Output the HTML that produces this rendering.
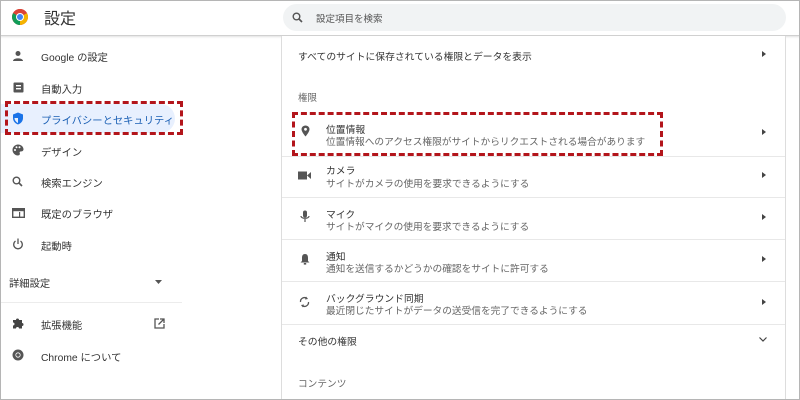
<!DOCTYPE html>
<html><head><meta charset="utf-8"><style>
*{margin:0;padding:0;box-sizing:border-box}
body{width:800px;height:400px;overflow:hidden;background:#fff;font-family:"Liberation Sans","Noto Sans CJK JP",sans-serif;position:relative;color:#333}
.frame{position:absolute;left:0;top:0;width:800px;height:400px;border:1px solid #b5b5b5;z-index:10;pointer-events:none}
.hdr{position:absolute;left:0;top:0;width:800px;height:36px;border-bottom:1px solid #d0d0d0;box-shadow:0 1px 2px rgba(0,0,0,.12);background:#fff}
.title{position:absolute;left:44px;top:5px;font-size:16px;color:#333}
.search{position:absolute;left:283px;top:4px;width:503px;height:27px;border-radius:14px;background:#f1f3f4}
.search span{position:absolute;left:33px;top:7px;font-size:9.5px;color:#555}
.abs{position:absolute}
.side{position:absolute;font-size:10.3px;color:#333}
.ic{position:absolute}
.sel{position:absolute;left:0;top:104px;width:175px;height:29px;background:#e8f0fe;border-radius:0 15px 15px 0}
.card{position:absolute;left:281px;top:36px;width:505px;height:364px;border-left:1px solid #ddd;border-right:1px solid #ddd;background:#fff}
.rt{position:absolute;font-size:9.8px;color:#333}
.rs{position:absolute;font-size:9.7px;color:#666}
.div{position:absolute;left:282px;width:503px;height:1px;background:#e8e8e8}
.arr{position:absolute;left:762px;width:0;height:0;border-top:3.5px solid transparent;border-bottom:3.5px solid transparent;border-left:4px solid #444}
.red{position:absolute;border:3px dashed #b3151b}
</style></head><body>
<div class="hdr">
<svg class="ic" style="left:11px;top:8px" width="18" height="18" viewBox="0 0 18 18"><circle cx="9" cy="9" r="8" fill="#db4437"/><path d="M9 9 L2.1 13 A8 8 0 0 0 9 17 Z" fill="#0f9d58"/><path d="M9 9 L2.1 13 A8 8 0 0 1 1 9 A8 8 0 0 1 2.1 5 Z" fill="#0f9d58"/><path d="M9 9 L9 17 A8 8 0 0 0 15.9 5 Z" fill="#f4b400"/><path d="M9 9 L15.9 5 A8 8 0 0 0 9 1 A8 8 0 0 0 2.1 5Z" fill="#db4437"/><circle cx="9" cy="9" r="4" fill="#fff"/><circle cx="9" cy="9" r="3" fill="#4285f4"/></svg>
<div class="title">設定</div>
<div class="search"><svg class="ic" style="left:9px;top:8px" width="11" height="11" viewBox="0 0 11 11"><circle cx="4.5" cy="4.5" r="3.3" stroke="#555" stroke-width="1.4" fill="none"/><path d="M7 7 L10 10" stroke="#555" stroke-width="1.6"/></svg><span>設定項目を検索</span></div>
</div>
<div class="sel"></div>
<svg class="ic" style="left:12px;top:50px" width="12" height="12" viewBox="0 0 12 12"><circle cx="6" cy="3.5" r="2.5" fill="#555"/><path d="M1 11 C1 7.5 11 7.5 11 11Z" fill="#555"/></svg>
<svg class="ic" style="left:13px;top:81px" width="11" height="12" viewBox="0 0 11 12"><rect x="0.5" y="1.5" width="10" height="10" rx="1" fill="#555"/><rect x="3" y="4" width="5" height="1.4" fill="#fff"/><rect x="3" y="7" width="5" height="1.4" fill="#fff"/></svg>
<svg class="ic" style="left:12px;top:112px" width="12" height="13" viewBox="0 0 12 13"><path d="M6 0.5 L11 2.5 V6 C11 9 9 11.5 6 12.5 C3 11.5 1 9 1 6 V2.5Z" fill="#1a73e8"/><path d="M6 2 V11 C4 10 2.5 8 2.5 6 H6Z" fill="#fff" opacity=".9"/></svg>
<svg class="ic" style="left:12px;top:144px" width="12" height="12" viewBox="0 0 12 12"><path d="M6 0.5 C9 0.5 11.5 2.7 11.5 5.3 C11.5 7 10 7.5 8.8 7.5 C7.5 7.5 7.5 8.5 7.8 9.3 C8.2 10.5 7.3 11.5 6 11.5 C3 11.5 0.5 9 0.5 6 C0.5 3 3 0.5 6 0.5Z" fill="#555"/><circle cx="3" cy="6" r="1" fill="#fff"/><circle cx="4.5" cy="3.3" r="1" fill="#fff"/><circle cx="7.5" cy="3.3" r="1" fill="#fff"/></svg>
<svg class="ic" style="left:12px;top:176px" width="11" height="11" viewBox="0 0 11 11"><circle cx="4.5" cy="4.5" r="3.3" stroke="#555" stroke-width="1.4" fill="none"/><path d="M7 7 L10 10" stroke="#555" stroke-width="1.6"/></svg>
<svg class="ic" style="left:12px;top:208px" width="13" height="10" viewBox="0 0 13 10"><rect x="0.7" y="0.7" width="11.6" height="8.6" fill="none" stroke="#555" stroke-width="1.4"/><rect x="0.7" y="0.7" width="11.6" height="2.5" fill="#555"/><rect x="7" y="4" width="1.2" height="5" fill="#555"/></svg>
<svg class="ic" style="left:12px;top:238px" width="12" height="12" viewBox="0 0 12 12"><path d="M3.5 3 A4.3 4.3 0 1 0 8.5 3" fill="none" stroke="#555" stroke-width="1.3"/><path d="M6 0.5 V6" stroke="#555" stroke-width="1.3"/></svg>
<svg class="ic" style="left:155px;top:280px" width="7" height="4" viewBox="0 0 7 4"><path d="M0 0 H7 L3.5 4Z" fill="#555"/></svg>
<div class="abs" style="left:0;top:302px;width:182px;height:1px;background:#ececec"></div>
<svg class="ic" style="left:12px;top:317px" width="12" height="12" viewBox="0 0 12 12"><path d="M1 3 H4 A1.5 1.5 0 1 1 7 3 H10 V6 A1.5 1.5 0 1 1 10 9 V11.5 H7 A1.5 1.5 0 1 0 4 11.5 H1 V8.5 A1.5 1.5 0 1 0 1 5.5Z" fill="#444"/></svg>
<svg class="ic" style="left:154px;top:318px" width="11" height="11" viewBox="0 0 11 11"><path d="M5 1 H1 V10 H10 V6" fill="none" stroke="#555" stroke-width="1.3"/><path d="M6 1 H10 V5 M10 1 L4.5 6.5" fill="none" stroke="#555" stroke-width="1.3"/></svg>
<svg class="ic" style="left:12px;top:349px" width="12" height="12" viewBox="0 0 12 12"><circle cx="6" cy="6" r="5.5" fill="#555"/><circle cx="6" cy="6" r="2.6" fill="#fff"/><circle cx="6" cy="6" r="1.8" fill="#555"/></svg>
<div class="side" style="left:41px;top:49px">Google の設定</div>
<div class="side" style="left:41px;top:81px">自動入力</div>
<div class="side" style="left:41px;top:112px;color:#1a5fb4">プライバシーとセキュリティ</div>
<div class="side" style="left:41px;top:144px">デザイン</div>
<div class="side" style="left:41px;top:175px">検索エンジン</div>
<div class="side" style="left:41px;top:206px">既定のブラウザ</div>
<div class="side" style="left:41px;top:238px">起動時</div>
<div class="side" style="left:9px;top:275px">詳細設定</div>
<div class="side" style="left:41px;top:317px">拡張機能</div>
<div class="side" style="left:41px;top:349px">Chrome について</div>
<div class="card"></div>
<div class="rt" style="left:298px;top:49px">すべてのサイトに保存されている権限とデータを表示</div>
<div class="arr" style="top:51px"></div>
<div class="rs" style="left:298px;top:90px;font-size:9.5px">権限</div>
<svg class="ic" style="left:301px;top:125px" width="9" height="12" viewBox="0 0 9 12"><path d="M4.5 0.5 C7 0.5 8.5 2.3 8.5 4.3 C8.5 7 4.5 11.5 4.5 11.5 C4.5 11.5 0.5 7 0.5 4.3 C0.5 2.3 2 0.5 4.5 0.5Z" fill="#555"/><circle cx="4.5" cy="4.3" r="1.4" fill="#fff"/></svg>
<div class="rt" style="left:326px;top:122px">位置情報</div>
<div class="rs" style="left:326px;top:134px">位置情報へのアクセス権限がサイトからリクエストされる場合があります</div>
<div class="arr" style="top:129px"></div>
<div class="div" style="top:156px"></div>
<svg class="ic" style="left:298px;top:171px" width="13" height="9" viewBox="0 0 13 9"><rect x="0" y="0.5" width="9" height="8" fill="#555"/><path d="M9 4.5 L13 1 V8Z" fill="#555"/></svg>
<div class="rt" style="left:326px;top:163px">カメラ</div>
<div class="rs" style="left:326px;top:176px">サイトがカメラの使用を要求できるようにする</div>
<div class="arr" style="top:172px"></div>
<div class="div" style="top:197px"></div>
<svg class="ic" style="left:300px;top:210px" width="10" height="13" viewBox="0 0 10 13"><rect x="3" y="0.5" width="4" height="7" rx="2" fill="#555"/><path d="M1 6 C1 9 9 9 9 6" fill="none" stroke="#555" stroke-width="1.2"/><path d="M5 9 V12" stroke="#555" stroke-width="1.2"/></svg>
<div class="rt" style="left:326px;top:207px">マイク</div>
<div class="rs" style="left:326px;top:219px">サイトがマイクの使用を要求できるようにする</div>
<div class="arr" style="top:214px"></div>
<div class="div" style="top:239px"></div>
<svg class="ic" style="left:300px;top:253px" width="10" height="12" viewBox="0 0 10 12"><path d="M5 1 C7.5 1 8 3 8 5 V8 L9.5 9.5 H0.5 L2 8 V5 C2 3 2.5 1 5 1Z" fill="#555"/><rect x="3.8" y="10" width="2.4" height="1.6" fill="#555"/></svg>
<div class="rt" style="left:326px;top:249px">通知</div>
<div class="rs" style="left:326px;top:261px">通知を送信するかどうかの確認をサイトに許可する</div>
<div class="arr" style="top:256px"></div>
<div class="div" style="top:281px"></div>
<svg class="ic" style="left:299px;top:296px" width="11" height="12" viewBox="0 0 11 12"><path d="M1.5 6 A4 4 0 0 1 8 2.5" fill="none" stroke="#555" stroke-width="1.3"/><path d="M7 0.5 L9 3 L6 3.5Z" fill="#555"/><path d="M9.5 6 A4 4 0 0 1 3 9.5" fill="none" stroke="#555" stroke-width="1.3"/><path d="M4 11.5 L2 9 L5 8.5Z" fill="#555"/></svg>
<div class="rt" style="left:326px;top:291px">バックグラウンド同期</div>
<div class="rs" style="left:326px;top:303px">最近閉じたサイトがデータの送受信を完了できるようにする</div>
<div class="arr" style="top:299px"></div>
<div class="div" style="top:324px"></div>
<div class="rt" style="left:298px;top:334px">その他の権限</div>
<svg class="ic" style="left:759px;top:337px" width="8" height="5" viewBox="0 0 8 5"><path d="M0.5 0.5 L4 4 L7.5 0.5" fill="none" stroke="#444" stroke-width="1.2"/></svg>
<div class="rs" style="left:298px;top:376px">コンテンツ</div>
<div class="red" style="left:5px;top:101px;width:178px;height:34px"></div>
<div class="red" style="left:292px;top:112px;width:371px;height:44px"></div>
<div class="frame"></div>
</body></html>
